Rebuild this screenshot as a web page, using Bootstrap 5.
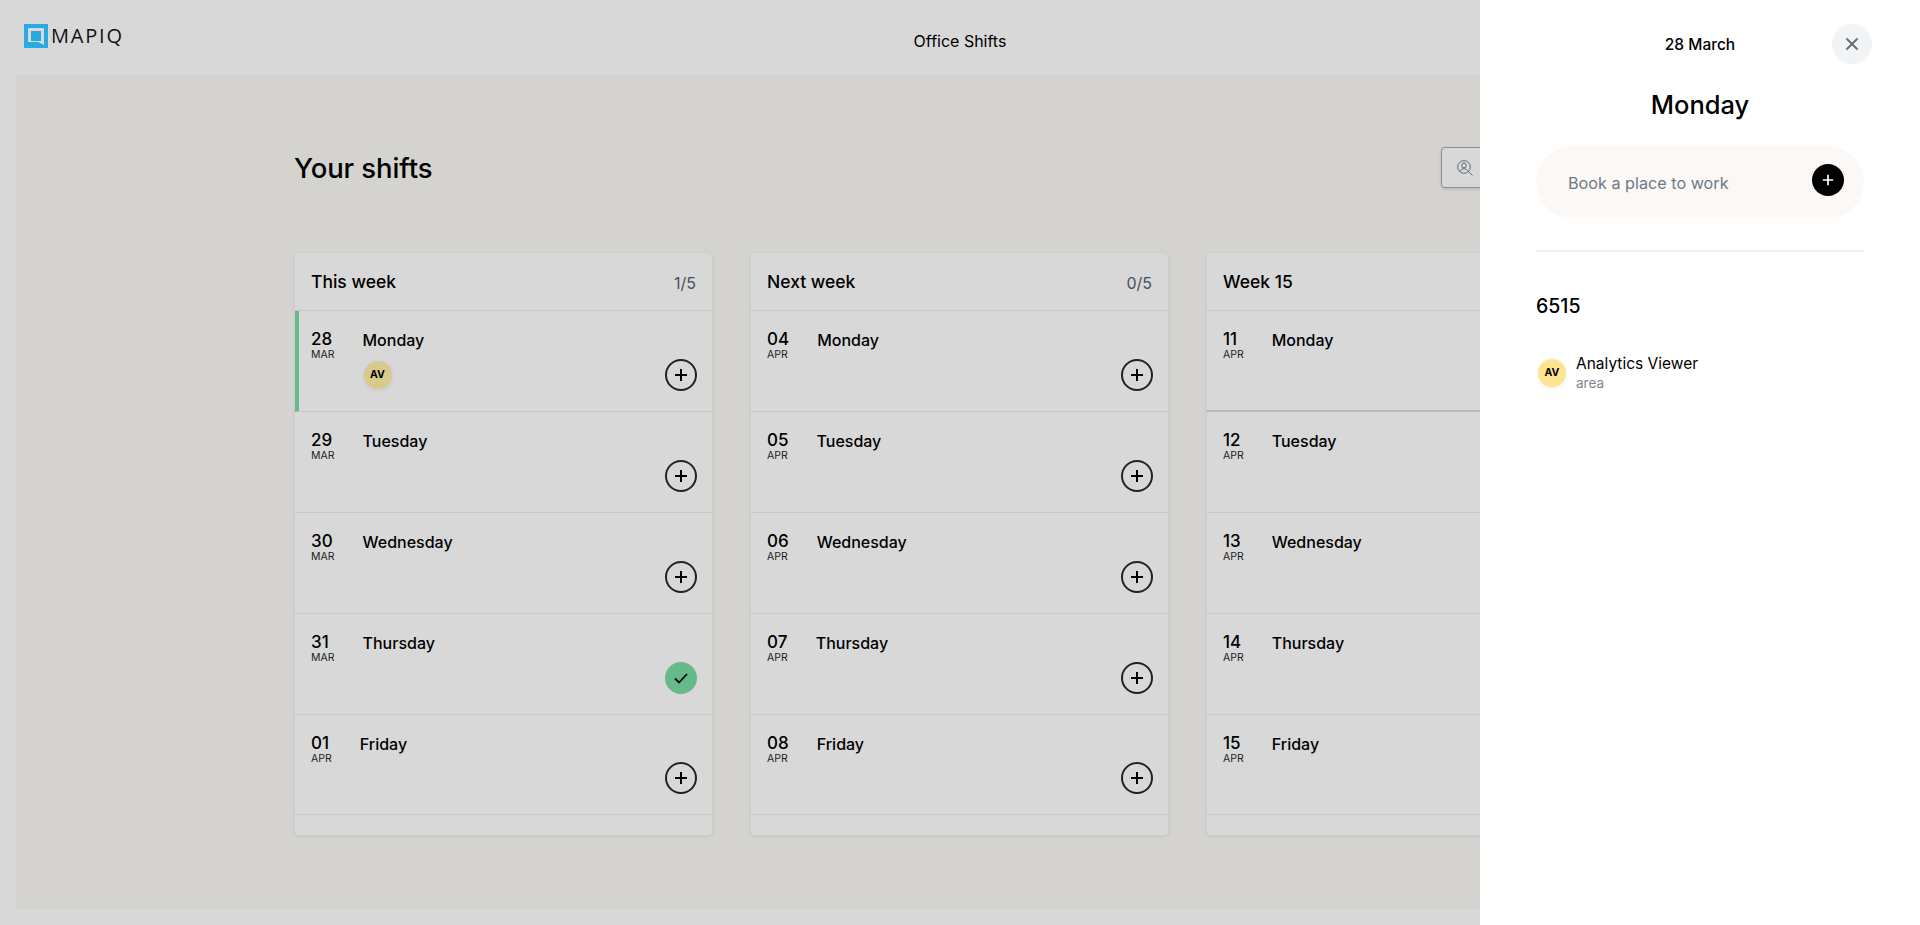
<!DOCTYPE html>
<html lang="en">
  <head>
    <meta charset="UTF-8" />
    <meta name="viewport" content="width=device-width, initial-scale=1.0" />
    <title>Office Shifts</title>
    <link rel="stylesheet" href="https://cdn.jsdelivr.net/npm/bootstrap@5.3.0/dist/css/bootstrap.min.css" />
    <style>
      body {
        font-family: Inter, "Open Sans", sans-serif;
        background-color: #d8d8d8;
        color: #000;
        height: 925px;
        overflow: hidden;
      }

      .top-bar { height: 75px; }
      .logo-box { margin-left: 24px; margin-top: -3px; gap: 3px; width: 100px; }
      .logo-word { font-family: "Open Sans", sans-serif; font-size: 20px; line-height: 24px; letter-spacing: 1.8px; color: #111; }
      .bar-title { font-size: 16px; margin-top: 7px; }
      .bar-spacer { width: 124px; }

      .shift-area { background-color: #d4d3cf; margin: 0 16px; height: 834px; padding: 72px 279px 0 278px; }
      .page-title { font-size: 27.5px; font-weight: 500; letter-spacing: -0.1px; line-height: 40px; margin: 0; }
      .user-search { width: 184px; height: 41px; border: 1px solid #8b9299; border-radius: 4px; background: #d8d8d8; box-shadow: 0 1px 3px rgba(0,0,0,.15); padding-left: 15px; }
      .week-cols { margin-top: 64px; gap: 37px; }

      .week-card { width: 419px; flex-shrink: 0; background: #d8d8d8; color: #000; border: 1px solid #cdcdcb; border-radius: 5px; box-shadow: 0 1px 3px rgba(0,0,0,.07); padding-bottom: 20px; }
      .week-head { height: 58px; padding: 2px 16px 0; background: transparent; color: #000; border-bottom: 1px solid #c8c8c8; }
      .week-name { font-size: 17.5px; font-weight: 500; }
      .week-count { font-size: 16px; color: #46525e; }
      .day-row { height: 100.9px; padding: 18px 15px 20px 16px; background: transparent; color: #000; border: 0; border-width: 0 0 1px 0 !important; border-style: solid; border-color: #c8c8c8; border-radius: 0 !important; gap: 28px; }
      .day-row.is-today { border-left: 4px solid #66b988 !important; padding-left: 12px; }
      .day-row.is-hover { border-bottom: 2px solid #b9b9b9 !important; }
      .day-date { font-size: 17px; line-height: 20px; font-weight: 500; }
      .day-month { font-size: 10.5px; line-height: 11px; color: #222; }
      .day-name { font-size: 16px; line-height: 24px; font-weight: 500; margin-top: -1px; }
      .round-add { width: 32px; height: 32px; border: 2px solid #222; border-radius: 50%; padding: 0; background: transparent; color: #000; }
      .round-done { width: 32px; height: 32px; border: 0; border-radius: 50%; padding: 0; background: #66b988; }

      .avatar-dot { width: 28px; height: 28px; border-radius: 50%; font-size: 10.5px; font-weight: 700; box-shadow: 0 1px 4px rgba(0,0,0,.08); }
      .avatar-dim { background: #d9c98b; margin: 9px 0 0 1px; }
      .avatar-full { background: #fde58f; margin-left: 2px; }

      .side-panel.offcanvas { --bs-offcanvas-width: 440px; border: 0; padding: 0 56px; color: #000; }
      .panel-date { font-size: 15.5px; font-weight: 500; margin-top: 34px; line-height: 22px; }
      .panel-close { top: 24px; right: 48px; width: 40px; height: 40px; border: 0; border-radius: 50%; background: #f2f3f4; padding: 0; }
      .panel-day { font-size: 25.5px; font-weight: 500; line-height: 36px; margin: 31px 0 23px; }
      .book-pill { height: 72px; border-radius: 36px; background: #fbf8f5; padding: 0 20px 0 32px; }
      .book-text { font-size: 16.2px; color: #6c7a89; margin-top: 2px; }
      .book-add { width: 32px; height: 32px; border: 0; border-radius: 50%; padding: 0; background: #000; margin-top: -4px; }
      .panel-line { height: 2px; background: #f0f0f0; margin-top: 32px; }
      .panel-area { font-size: 19.5px; font-weight: 500; line-height: 24px; margin: 42px 0 0 0; }
      .person-row { margin-top: 35px; gap: 10px; }
      .person-name { font-size: 15.5px; line-height: 20px; margin-top: 1px; }
      .person-area { font-size: 13.5px; line-height: 18px; color: #7b8794; }
    </style>
  </head>
  <body>
    <svg width="0" height="0" class="position-absolute">
      <symbol id="plus" viewBox="0 0 14 14"><path d="M7 1v12M1 7h12" fill="none" stroke="currentColor" stroke-width="2" /></symbol>
    </svg>

    <header class="top-bar d-flex align-items-center justify-content-between">
      <div class="logo-box d-flex align-items-center">
        <svg width="24" height="24" viewBox="0 0 24 24">
          <rect width="24" height="24" fill="#29abe2" />
          <path d="M4 4h16v17l-6-3H4z" fill="#d8d8d8" />
          <path d="M7 7h10v10H7z" fill="#29abe2" />
        </svg>
        <span class="logo-word">MAPIQ</span>
      </div>
      <div class="bar-title">Office Shifts</div>
      <div class="bar-spacer"></div>
    </header>

    <main class="shift-area">
      <div class="d-flex align-items-center justify-content-between">
        <h1 class="page-title">Your shifts</h1>
        <div class="user-search d-flex align-items-center">
          <svg width="16" height="16" viewBox="0 0 16 16" fill="none" stroke="#5f6b78" stroke-width="1">
            <circle cx="7" cy="7" r="6.3" />
            <circle cx="7" cy="5.5" r="2.3" />
            <path d="M3 11.5c.8-2 2.2-2.8 4-2.8s3.2.8 4 2.8M11.5 11.5l4 4" />
          </svg>
        </div>
      </div>

      <div class="week-cols d-flex">
        <section class="card week-card">
          <div class="card-header week-head d-flex align-items-center justify-content-between">
            <span class="week-name">This week</span><span class="week-count">1/5</span>
          </div>
          <div class="list-group list-group-flush">
            <div class="list-group-item day-row is-today d-flex">
              <div><div class="day-date">28</div><div class="day-month">MAR</div></div>
              <div class="flex-grow-1"><div class="day-name">Monday</div><div class="avatar-dot avatar-dim d-flex align-items-center justify-content-center">AV</div></div>
              <button class="round-add align-self-end d-flex align-items-center justify-content-center"><svg width="14" height="14"><use href="#plus" /></svg></button>
            </div>
            <div class="list-group-item day-row d-flex">
              <div><div class="day-date">29</div><div class="day-month">MAR</div></div>
              <div class="flex-grow-1 day-name">Tuesday</div>
              <button class="round-add align-self-end d-flex align-items-center justify-content-center"><svg width="14" height="14"><use href="#plus" /></svg></button>
            </div>
            <div class="list-group-item day-row d-flex">
              <div><div class="day-date">30</div><div class="day-month">MAR</div></div>
              <div class="flex-grow-1 day-name">Wednesday</div>
              <button class="round-add align-self-end d-flex align-items-center justify-content-center"><svg width="14" height="14"><use href="#plus" /></svg></button>
            </div>
            <div class="list-group-item day-row d-flex">
              <div><div class="day-date">31</div><div class="day-month">MAR</div></div>
              <div class="flex-grow-1 day-name">Thursday</div>
              <button class="round-done align-self-end d-flex align-items-center justify-content-center">
                <svg width="14" height="12" viewBox="0 0 14 12"><path d="M1 6.5l4 4L13 2" fill="none" stroke="#000" stroke-width="1.8" /></svg>
              </button>
            </div>
            <div class="list-group-item day-row d-flex">
              <div><div class="day-date">01</div><div class="day-month">APR</div></div>
              <div class="flex-grow-1 day-name">Friday</div>
              <button class="round-add align-self-end d-flex align-items-center justify-content-center"><svg width="14" height="14"><use href="#plus" /></svg></button>
            </div>
          </div>
        </section>

        <section class="card week-card">
          <div class="card-header week-head d-flex align-items-center justify-content-between">
            <span class="week-name">Next week</span><span class="week-count">0/5</span>
          </div>
          <div class="list-group list-group-flush">
            <div class="list-group-item day-row d-flex">
              <div><div class="day-date">04</div><div class="day-month">APR</div></div>
              <div class="flex-grow-1 day-name">Monday</div>
              <button class="round-add align-self-end d-flex align-items-center justify-content-center"><svg width="14" height="14"><use href="#plus" /></svg></button>
            </div>
            <div class="list-group-item day-row d-flex">
              <div><div class="day-date">05</div><div class="day-month">APR</div></div>
              <div class="flex-grow-1 day-name">Tuesday</div>
              <button class="round-add align-self-end d-flex align-items-center justify-content-center"><svg width="14" height="14"><use href="#plus" /></svg></button>
            </div>
            <div class="list-group-item day-row d-flex">
              <div><div class="day-date">06</div><div class="day-month">APR</div></div>
              <div class="flex-grow-1 day-name">Wednesday</div>
              <button class="round-add align-self-end d-flex align-items-center justify-content-center"><svg width="14" height="14"><use href="#plus" /></svg></button>
            </div>
            <div class="list-group-item day-row d-flex">
              <div><div class="day-date">07</div><div class="day-month">APR</div></div>
              <div class="flex-grow-1 day-name">Thursday</div>
              <button class="round-add align-self-end d-flex align-items-center justify-content-center"><svg width="14" height="14"><use href="#plus" /></svg></button>
            </div>
            <div class="list-group-item day-row d-flex">
              <div><div class="day-date">08</div><div class="day-month">APR</div></div>
              <div class="flex-grow-1 day-name">Friday</div>
              <button class="round-add align-self-end d-flex align-items-center justify-content-center"><svg width="14" height="14"><use href="#plus" /></svg></button>
            </div>
          </div>
        </section>

        <section class="card week-card">
          <div class="card-header week-head d-flex align-items-center justify-content-between">
            <span class="week-name">Week 15</span><span class="week-count">0/5</span>
          </div>
          <div class="list-group list-group-flush">
            <div class="list-group-item day-row is-hover d-flex">
              <div><div class="day-date">11</div><div class="day-month">APR</div></div>
              <div class="flex-grow-1 day-name">Monday</div>
            </div>
            <div class="list-group-item day-row d-flex">
              <div><div class="day-date">12</div><div class="day-month">APR</div></div>
              <div class="flex-grow-1 day-name">Tuesday</div>
            </div>
            <div class="list-group-item day-row d-flex">
              <div><div class="day-date">13</div><div class="day-month">APR</div></div>
              <div class="flex-grow-1 day-name">Wednesday</div>
            </div>
            <div class="list-group-item day-row d-flex">
              <div><div class="day-date">14</div><div class="day-month">APR</div></div>
              <div class="flex-grow-1 day-name">Thursday</div>
            </div>
            <div class="list-group-item day-row d-flex">
              <div><div class="day-date">15</div><div class="day-month">APR</div></div>
              <div class="flex-grow-1 day-name">Friday</div>
            </div>
          </div>
        </section>
      </div>
    </main>

    <aside class="offcanvas offcanvas-end show side-panel" data-bs-backdrop="false" data-bs-scroll="true">
      <div class="panel-date text-center">28 March</div>
      <button class="panel-close position-absolute d-flex align-items-center justify-content-center" aria-label="Close">
        <svg width="14" height="14" viewBox="0 0 14 14"><path d="M1.5 1.5l11 11M12.5 1.5l-11 11" fill="none" stroke="#5f6b78" stroke-width="1.8" /></svg>
      </button>
      <div class="panel-day text-center">Monday</div>
      <div class="book-pill d-flex align-items-center justify-content-between">
        <span class="book-text">Book a place to work</span>
        <button class="book-add d-flex align-items-center justify-content-center text-white"><svg width="12" height="12"><use href="#plus" /></svg></button>
      </div>
      <div class="panel-line"></div>
      <div class="panel-area">6515</div>
      <div class="person-row d-flex align-items-center">
        <div class="avatar-dot avatar-full d-flex align-items-center justify-content-center">AV</div>
        <div>
          <div class="person-name">Analytics Viewer</div>
          <div class="person-area">area</div>
        </div>
      </div>
    </aside>

    <script src="https://cdn.jsdelivr.net/npm/bootstrap@5.3.0/dist/js/bootstrap.bundle.min.js"></script>
  </body>
</html>
